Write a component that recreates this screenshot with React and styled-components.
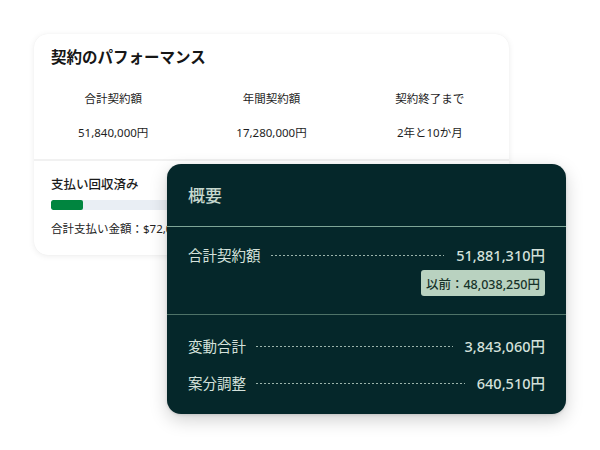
import styled, { createGlobalStyle } from 'styled-components';

const GlobalStyle = createGlobalStyle`
  html, body {
    margin: 0;
    padding: 0;
    background: #ffffff;
  }
  body {
    font-family: "Noto Sans", "Noto Sans CJK JP", sans-serif;
    -webkit-font-smoothing: antialiased;
  }
`;

const stats = [
  { label: '合計契約額', value: '51,840,000円' },
  { label: '年間契約額', value: '17,280,000円' },
  { label: '契約終了まで', value: '2年と10か月' },
];

function App() {
  return (
    <>
      <GlobalStyle />
      <StStage>
        <StCard>
          <StTitle>契約のパフォーマンス</StTitle>
          <StStats>
            {stats.map((s) => (
              <StStat key={s.label}>
                <span>{s.label}</span>
                <span>{s.value}</span>
              </StStat>
            ))}
          </StStats>
          <StPayment>
            <StPaymentTitle>支払い回収済み</StPaymentTitle>
            <StTrack>
              <StFill style={{ width: '32px' }} />
            </StTrack>
            <StPaymentNote>合計支払い金額：$72,000</StPaymentNote>
          </StPayment>
        </StCard>

        <StSummary>
          <StSummaryHead>概要</StSummaryHead>
          <StSection $top={17} $bottom={18}>
            <StRow>
              <StRowLabel>合計契約額</StRowLabel>
              <StDots />
              <StRowValue>51,881,310円</StRowValue>
            </StRow>
            <StBadge>以前：48,038,250円</StBadge>
          </StSection>
          <StSection $top={20} $bottom={19} $gap={15} $last>
            <StRow>
              <StRowLabel>変動合計</StRowLabel>
              <StDots />
              <StRowValue>3,843,060円</StRowValue>
            </StRow>
            <StRow>
              <StRowLabel>案分調整</StRowLabel>
              <StDots />
              <StRowValue>640,510円</StRowValue>
            </StRow>
          </StSection>
        </StSummary>
      </StStage>
    </>
  );
}

export default App;

const StStage = styled.div`
  position: relative;
  width: 600px;
  height: 450px;
  padding: 34px 0 0 34px;
  box-sizing: border-box;
`;

const StCard = styled.div`
  width: 475px;
  height: 221px;
  box-sizing: border-box;
  background: #ffffff;
  border-radius: 14px;
  box-shadow: 0 1px 6px rgba(0, 0, 0, 0.08), 0 0 1px rgba(0, 0, 0, 0.06);
  overflow: hidden;
  color: #1a1a1a;
`;

const StTitle = styled.h2`
  margin: 0;
  padding: 11px 17px 0;
  font-size: 15.5px;
  line-height: 24px;
  font-weight: 700;
  color: #161616;
`;

const StStats = styled.div`
  display: grid;
  grid-template-columns: repeat(3, 1fr);
  padding: 21px 0 17px;
  border-bottom: 2px solid #f1f1f1;
`;

const StStat = styled.div`
  display: flex;
  flex-direction: column;
  align-items: center;
  gap: 16px;
  font-size: 11.5px;
  line-height: 18px;
  color: #1e1e1e;
`;

const StPayment = styled.div`
  padding: 14px 17px 0;
`;

const StPaymentTitle = styled.div`
  font-size: 12.5px;
  line-height: 20px;
  font-weight: 500;
  color: #1b1b1b;
`;

const StTrack = styled.div`
  margin-top: 5px;
  height: 10px;
  border-radius: 2px;
  background: #e9eef4;
  overflow: hidden;
`;

const StFill = styled.div`
  height: 100%;
  border-radius: 2px;
  background: #00853f;
`;

const StPaymentNote = styled.div`
  margin-top: 10px;
  font-size: 11.5px;
  line-height: 18px;
  color: #222;
  white-space: nowrap;
`;

const StSummary = styled.div`
  position: absolute;
  left: 167px;
  top: 164px;
  width: 399px;
  height: 250px;
  box-sizing: border-box;
  background: #05272a;
  border-radius: 14px;
  box-shadow: 0 6px 18px rgba(0, 0, 0, 0.18), 0 1px 3px rgba(0, 0, 0, 0.12);
  overflow: hidden;
  color: #d4e1db;
`;

const StSummaryHead = styled.div`
  height: 63px;
  box-sizing: border-box;
  padding: 20px 21px 0;
  font-size: 17px;
  line-height: 24px;
  font-weight: 500;
  color: #c6d8ce;
  border-bottom: 1px solid #7ea597;
`;

const StSection = styled.div`
  display: flex;
  flex-direction: column;
  align-items: flex-end;
  gap: ${(p) => p.$gap || 4}px;
  padding: ${(p) => p.$top}px 21px ${(p) => p.$bottom}px;
  border-bottom: ${(p) => (p.$last ? 'none' : '1px solid #4f7368')};
`;

const StRow = styled.div`
  display: flex;
  align-items: center;
  width: 100%;
  font-size: 14.5px;
  line-height: 22px;
`;

const StRowLabel = styled.span`
  color: #d4e1db;
  white-space: nowrap;
`;

const StDots = styled.span`
  flex: 1;
  height: 1px;
  margin: 1px 12px 0 10px;
  background: repeating-linear-gradient(
    to right,
    #9bb3ab 0,
    #9bb3ab 2px,
    transparent 2px,
    transparent 4px
  );
`;

const StRowValue = styled.span`
  color: #d4e1db;
  white-space: nowrap;
  font-weight: 500;
`;

const StBadge = styled.div`
  height: 26px;
  box-sizing: border-box;
  padding: 0 5px;
  display: flex;
  align-items: center;
  border-radius: 3px;
  background: #b9d2c0;
  color: #17322a;
  font-size: 12.5px;
  font-weight: 500;
`;
